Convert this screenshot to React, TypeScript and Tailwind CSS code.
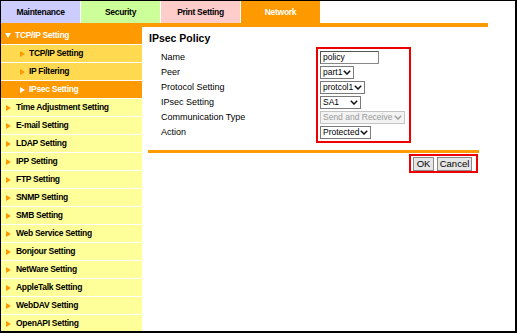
function Tri({ color, down }: { color: string; down?: boolean }) {
  return down ? (
    <svg width="6" height="5" viewBox="0 0 6 5" className="shrink-0">
      <polygon points="0,0 6,0 3,5" fill={color} />
    </svg>
  ) : (
    <svg width="5" height="6" viewBox="0 0 5 6" className="shrink-0">
      <polygon points="0,0 5,3 0,6" fill={color} />
    </svg>
  );
}

function Chevron({ color }: { color: string }) {
  return (
    <svg width="8" height="5" viewBox="0 0 8 5" className="shrink-0">
      <polyline points="0.8,0.8 4,4 7.2,0.8" fill="none" stroke={color} strokeWidth="1.5" />
    </svg>
  );
}

function Select({ value, width, disabled }: { value: string; width: string; disabled?: boolean }) {
  return (
    <div
      className={`${width} h-[13px] flex items-center justify-between pl-[2px] pr-[2px] border text-[8.5px] leading-[11px] ${
        disabled ? "border-[#c4c4c4] bg-[#f3f3f3] text-[#9a9a9a]" : "border-[#7a7a7a] bg-white text-black"
      }`}
    >
      <span className="whitespace-nowrap">{value}</span>
      <Chevron color={disabled ? "#a0a0a0" : "#111"} />
    </div>
  );
}

const subItems = ["TCP/IP Setting", "IP Filtering", "IPsec Setting"];
const mainItems = [
  "Time Adjustment Setting",
  "E-mail Setting",
  "LDAP Setting",
  "IPP Setting",
  "FTP Setting",
  "SNMP Setting",
  "SMB Setting",
  "Web Service Setting",
  "Bonjour Setting",
  "NetWare Setting",
  "AppleTalk Setting",
  "WebDAV Setting",
  "OpenAPI Setting",
];

const labels = ["Name", "Peer", "Protocol Setting", "IPsec Setting", "Communication Type", "Action"];

export default function App() {
  return (
    <div className="w-[517px] h-[333px] overflow-hidden bg-white border-l border-t border-r-2 border-b-2 border-black flex flex-col font-['Liberation_Sans',Arial,sans-serif]">
      {/* tabs */}
      <div className="flex h-[22px] gap-px shrink-0 font-bold text-[8.5px] tracking-[-0.3px] text-black">
        <div className="w-[79px] bg-[#ccccff] flex items-center justify-center">Maintenance</div>
        <div className="w-[79px] bg-[#ccff99] flex items-center justify-center">Security</div>
        <div className="w-[79px] bg-[#ffcccc] flex items-center justify-center">Print Setting</div>
        <div className="w-[79px] bg-[#ff9900] text-white flex items-center justify-center">Network</div>
      </div>
      <div className="h-[4px] w-[487px] bg-[#ff9900] shrink-0" />

      <div className="flex flex-1 min-h-0">
        {/* sidebar */}
        <div className="w-[141px] shrink-0 bg-[#ffff99] flex flex-col font-bold text-[8.5px] tracking-[-0.3px] leading-[17px]">
          <div className="h-[18px] shrink-0 border-b border-white bg-[#ff9900] text-white flex items-center gap-[4px] pl-[4px]">
            <Tri color="#fff" down />
            TCP/IP Setting
          </div>
          {subItems.map((s) => {
            const sel = s === "IPsec Setting";
            return (
              <div
                key={s}
                className={`h-[18px] shrink-0 border-b border-white flex items-center gap-[4px] pl-[19px] ${
                  sel ? "bg-[#ff9900] text-white" : "bg-[#ffd94f] text-black"
                }`}
              >
                <Tri color={sel ? "#fff" : "#ff9900"} />
                {s}
              </div>
            );
          })}
          {mainItems.map((s) => (
            <div key={s} className="h-[18px] shrink-0 border-b border-white flex items-center gap-[5px] pl-[5px] text-black">
              <Tri color="#ff9900" />
              {s}
            </div>
          ))}
        </div>

        {/* content */}
        <div className="ml-[6px] w-[331px] flex flex-col">
          <h1 className="mt-[2px] pl-px text-[10.5px] leading-[18px] font-bold text-black">IPsec Policy</h1>
          <div className="flex">
            <div className="w-[168px] pl-[13px] pt-[4px] flex flex-col gap-[2px] text-[9px] text-black">
              {labels.map((l) => (
                <div key={l} className="h-[13px] leading-[13px]">
                  {l}
                </div>
              ))}
            </div>
            <div className="w-[95px] border-2 border-[#ee0000] p-[2px] flex flex-col gap-[2px]">
              <div className="w-[59px] h-[13px] border border-[#888] border-t-[#555] border-l-[#555] text-[8.5px] leading-[11px] pl-[2px] text-black bg-white">
                policy
              </div>
              <Select value="part1" width="w-[34px]" />
              <Select value="protcol1" width="w-[45px]" />
              <Select value="SA1" width="w-[41px]" />
              <Select value="Send and Receive" width="w-[85px]" disabled />
              <Select value="Protected" width="w-[51px]" />
            </div>
          </div>
          <div className="mt-[7px] h-[3px] bg-[#ff9900]" />
          <div className="flex justify-end mt-[1px] mr-[1px]">
            <div className="border-2 border-[#ee0000] h-[19px] flex items-center gap-[3px] pl-[2px] pr-[4px]">
              <button className="w-[21px] h-[14px] border border-[#8a8a8a] bg-[#e6e6e6] text-[9.5px] leading-[12px] text-black">
                OK
              </button>
              <button className="w-[35px] h-[14px] border border-[#8a8a8a] bg-[#e6e6e6] text-[9.5px] leading-[12px] text-black">
                Cancel
              </button>
            </div>
          </div>
        </div>
      </div>
    </div>
  );
}
